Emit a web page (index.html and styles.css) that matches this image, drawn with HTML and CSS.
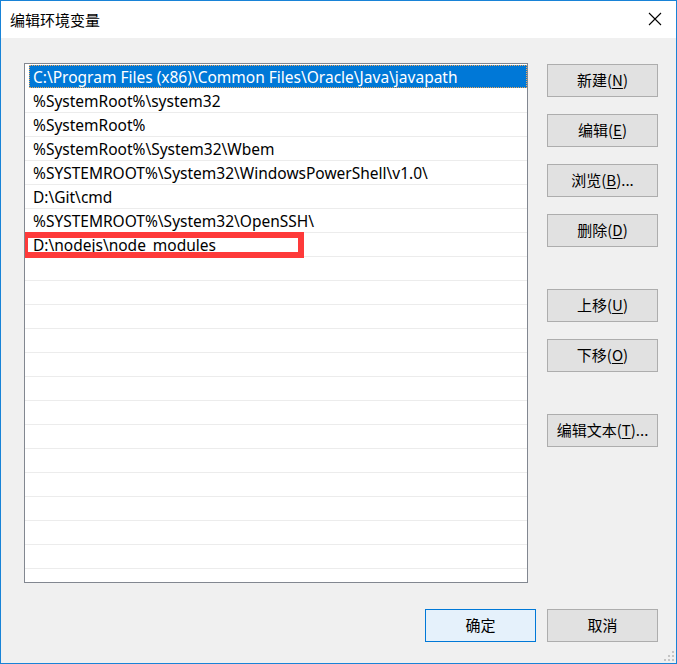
FILE: index.html
```html
<!DOCTYPE html>
<html lang="zh-CN">
<head>
<meta charset="utf-8">
<title>编辑环境变量</title>
<link rel="stylesheet" href="styles.css">
</head>
<body>
<div class="window">
  <div class="titlebar">
    <span class="title">编辑环境变量</span>
    <svg class="close" width="14" height="14" viewBox="0 0 14 14"><path d="M1 1 L13 13 M13 1 L1 13" stroke="#000" stroke-width="1.1" fill="none"/></svg>
  </div>
  <div class="content">
    <div class="main">
      <div class="list">
        <div class="row selected"><span class="focus">C:\Program Files (x86)\Common Files\Oracle\Java\javapath</span></div>
        <div class="row">%SystemRoot%\system32</div>
        <div class="row">%SystemRoot%</div>
        <div class="row">%SystemRoot%\System32\Wbem</div>
        <div class="row">%SYSTEMROOT%\System32\WindowsPowerShell\v1.0\</div>
        <div class="row">D:\Git\cmd</div>
        <div class="row">%SYSTEMROOT%\System32\OpenSSH\</div>
        <div class="row">D:\nodejs\node_modules</div>
        <div class="row"></div><div class="row"></div><div class="row"></div><div class="row"></div>
        <div class="row"></div><div class="row"></div><div class="row"></div><div class="row"></div>
        <div class="row"></div><div class="row"></div><div class="row"></div><div class="row"></div>
        <div class="row"></div><div class="row"></div><div class="row"></div>
        <div class="highlight"></div>
      </div>
      <div class="side">
        <div class="group">
          <button class="btn">新建(<u>N</u>)</button>
          <button class="btn">编辑(<u>E</u>)</button>
          <button class="btn">浏览(<u>B</u>)...</button>
          <button class="btn">删除(<u>D</u>)</button>
        </div>
        <div class="group">
          <button class="btn">上移(<u>U</u>)</button>
          <button class="btn">下移(<u>O</u>)</button>
        </div>
        <div class="group">
          <button class="btn">编辑文本(<u>T</u>)...</button>
        </div>
      </div>
    </div>
    <div class="footer">
      <button class="btn default">确定</button>
      <button class="btn">取消</button>
    </div>
    <svg class="grip" width="12" height="12" viewBox="0 0 12 12">
      <g fill="#c4c4c4">
        <rect x="9" y="1" width="2" height="2"/>
        <rect x="5" y="5" width="2" height="2"/><rect x="9" y="5" width="2" height="2"/>
        <rect x="1" y="9" width="2" height="2"/><rect x="5" y="9" width="2" height="2"/><rect x="9" y="9" width="2" height="2"/>
      </g>
    </svg>
  </div>
</div>
</body>
</html>
```
FILE: styles.css
```css
html, body {
  margin: 0;
  padding: 0;
  background: #f0f0f0;
}
body {
  font-family: "Noto Sans", "Noto Sans CJK SC", sans-serif;
  font-size: 15px;
  color: #000;
}
.window {
  width: 677px;
  height: 664px;
  box-sizing: border-box;
  border: 1px solid #1883d7;
  display: flex;
  flex-direction: column;
  background: #f0f0f0;
}
.titlebar {
  height: 37px;
  background: #fff;
  display: flex;
  align-items: center;
  justify-content: space-between;
  padding: 0 14px 0 9px;
}
.title {
  font-family: "Noto Sans CJK SC", sans-serif;
  font-size: 15px;
  line-height: 20px;
}
.close {
  display: block;
  margin-top: -1px;
}
.content {
  flex: 1;
  position: relative;
  padding: 25px 18px 0 23px;
  display: flex;
  flex-direction: column;
}
.main {
  display: flex;
  gap: 19px;
}
.list {
  position: relative;
  width: 504px;
  height: 520px;
  box-sizing: border-box;
  border: 1px solid #828790;
  background: #fff;
  padding-top: 1px;
  overflow: hidden;
}
.row {
  height: 23px;
  border-bottom: 1px solid #ececec;
  padding-left: 8px;
  line-height: 24px;
  white-space: nowrap;
  font-family: "Noto Sans", "Noto Sans CJK SC", sans-serif;
  font-size: 15.5px;
}
.row.selected {
  margin-left: 4px;
  padding-left: 0;
  background: #0078d7;
  color: #fff;
  border-bottom-color: #fff;
}
.focus {
  display: block;
  height: 21px;
  line-height: 22px;
  padding-left: 3px;
  border: 1px dotted #f0a85a;
}
.highlight {
  position: absolute;
  left: -3px;
  top: 168px;
  width: 282px;
  height: 26px;
  box-sizing: border-box;
  border: 6px solid #fe3a3a;
}
.side {
  display: flex;
  flex-direction: column;
  gap: 42px;
  padding-top: 1px;
}
.group {
  display: flex;
  flex-direction: column;
  gap: 17px;
}
.btn {
  width: 111px;
  height: 33px;
  box-sizing: border-box;
  border: 1px solid #adadad;
  background: #e1e1e1;
  font-family: "Noto Sans CJK SC", "Noto Sans", sans-serif;
  font-size: 15px;
  line-height: 20px;
  color: #000;
  padding: 0 0 2px 0;
  margin: 0;
  display: flex;
  align-items: center;
  justify-content: center;
}
.btn u {
  text-underline-offset: 2px;
}
.btn.default {
  background: #e5f1fb;
  border-color: #0078d7;
}
.footer {
  display: flex;
  justify-content: flex-end;
  gap: 11px;
  margin-top: 26px;
}
.grip {
  position: absolute;
  right: 1px;
  bottom: 1px;
}
```
